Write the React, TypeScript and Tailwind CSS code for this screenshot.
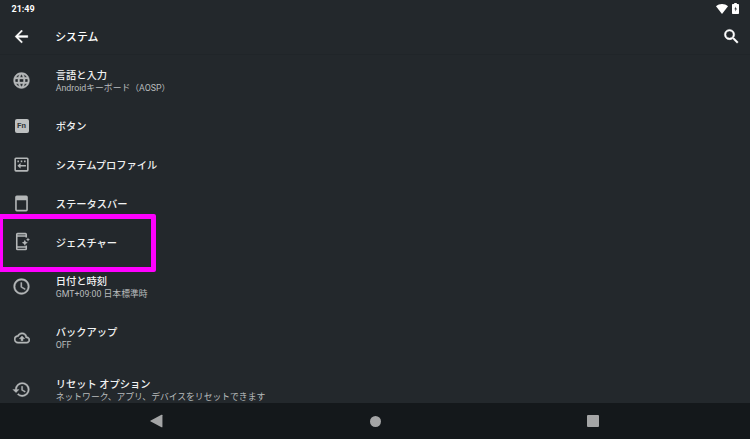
import type { ReactNode } from "react";

const LATIN_JP = "font-['Roboto','Noto_Sans_CJK_JP',sans-serif]";

function Glyph({ children, className = "size-[19px]" }: { children: ReactNode; className?: string }) {
  return (
    <svg viewBox="0 0 24 24" fill="currentColor" className={`block shrink-0 ${className}`}>
      {children}
    </svg>
  );
}

const globe = (
  <path stroke="currentColor" strokeWidth=".5" d="M11.99 2C6.47 2 2 6.48 2 12s4.47 10 9.99 10C17.52 22 22 17.52 22 12S17.52 2 11.99 2zm6.93 6h-2.95a15.65 15.65 0 0 0-1.38-3.56A8.03 8.03 0 0 1 18.92 8zM12 4.04c.83 1.2 1.48 2.53 1.91 3.96h-3.82c.43-1.43 1.08-2.76 1.91-3.96zM4.26 14C4.1 13.36 4 12.69 4 12s.1-1.36.26-2h3.38c-.08.66-.14 1.32-.14 2s.06 1.34.14 2H4.26zm.82 2h2.95c.32 1.25.78 2.45 1.38 3.56A7.987 7.987 0 0 1 5.08 16zm2.95-8H5.08a7.987 7.987 0 0 1 4.33-3.56A15.65 15.65 0 0 0 8.03 8zM12 19.96c-.83-1.2-1.48-2.53-1.91-3.96h3.82c-.43 1.43-1.08 2.76-1.91 3.96zM14.34 14H9.66c-.09-.66-.16-1.32-.16-2s.07-1.35.16-2h4.68c.09.65.16 1.32.16 2s-.07 1.34-.16 2zm.25 5.56c.6-1.11 1.06-2.31 1.38-3.56h2.95a8.03 8.03 0 0 1-4.33 3.56zM16.36 14c.08-.66.14-1.32.14-2s-.06-1.34-.14-2h3.38c.16.64.26 1.31.26 2s-.1 1.36-.26 2h-3.38z" />
);
const profile = (
  <>
    <path fillRule="evenodd" d="M5 3h14a2 2 0 0 1 2 2v14a2 2 0 0 1-2 2H5a2 2 0 0 1-2-2V5a2 2 0 0 1 2-2zm0 2v14h14V5z" />
    <path d="M6.8 7h2v2h-2zM11 7h2v2h-2zM15.2 7h2v2h-2zM17.6 12.6v2h-6.8v2.6l-4-3.6 4-3.6v2.6z" />
  </>
);
const statusBar = (
  <path fillRule="evenodd" d="M6 2h12a2 2 0 0 1 2 2v16a2 2 0 0 1-2 2H6a2 2 0 0 1-2-2V4a2 2 0 0 1 2-2zM6 7.9V20h12V7.9z" />
);
const gesture = (
  <>
    <path d="M7 1h10a2 2 0 0 1 2 2v4h-2V6H7v12h10v-1h2v4a2 2 0 0 1-2 2H7a2 2 0 0 1-2-2V3a2 2 0 0 1 2-2zm0 2v1h10V3zm0 17v1h10v-1z" fillRule="evenodd" />
    <path d="m16.2 9.7 1.2 2.6 2.6 1.2-2.6 1.2-1.2 2.6-1.2-2.6-2.6-1.2 2.6-1.2zM20.2 7l.8 1.7 1.7.8-1.7.8-.8 1.7-.8-1.7-1.7-.8 1.7-.8z" />
  </>
);
const clock = (
  <path stroke="currentColor" strokeWidth=".4" d="M11.99 2C6.47 2 2 6.48 2 12s4.47 10 9.99 10C17.52 22 22 17.52 22 12S17.52 2 11.99 2zM12 20a8 8 0 1 1 0-16 8 8 0 0 1 0 16zm.5-13H11v6l5.25 3.15.75-1.23-4.5-2.67z" />
);
const backup = (
  <path stroke="currentColor" strokeWidth=".7" d="M19.35 10.04A7.49 7.49 0 0 0 12 4C9.11 4 6.6 5.64 5.35 8.04A5.994 5.994 0 0 0 0 14c0 3.31 2.69 6 6 6h13c2.76 0 5-2.24 5-5 0-2.64-2.05-4.78-4.65-4.96zM19 18H6c-2.21 0-4-1.79-4-4 0-2.05 1.53-3.76 3.56-3.97l1.07-.11.5-.95A5.469 5.469 0 0 1 12 6c2.62 0 4.88 1.86 5.39 4.43l.3 1.5 1.53.11A2.98 2.98 0 0 1 22 15c0 1.65-1.35 3-3 3zM8 13h2.55v3h2.9v-3H16l-4-4z" />
);
const history = (
  <path stroke="currentColor" strokeWidth=".4" d="M13 3a9 9 0 0 0-9 9H1l3.89 3.89.07.14L9 12H6c0-3.87 3.13-7 7-7s7 3.13 7 7-3.13 7-7 7c-1.93 0-3.68-.79-4.94-2.06l-1.42 1.42A8.954 8.954 0 0 0 13 21a9 9 0 0 0 0-18zm-1 5v5l4.28 2.54.72-1.21-3.5-2.08V8z" />
);

type Entry = { title: string; detail?: string; icon: ReactNode };

const entries: Entry[] = [
  { title: "言語と入力", detail: "Androidキーボード（AOSP）", icon: <Glyph>{globe}</Glyph> },
  {
    title: "ボタン",
    icon: (
      <span className="mt-px flex size-[14px] items-center justify-center rounded-[2px] bg-[#bdc0c1] text-[8px] leading-none font-bold text-[#33383b]">
        Fn
      </span>
    ),
  },
  { title: "システムプロファイル", icon: <Glyph>{profile}</Glyph> },
  { title: "ステータスバー", icon: <Glyph>{statusBar}</Glyph> },
  { title: "ジェスチャー", icon: <Glyph>{gesture}</Glyph> },
  { title: "日付と時刻", detail: "GMT+09:00 日本標準時", icon: <Glyph>{clock}</Glyph> },
  { title: "バックアップ", detail: "OFF", icon: <Glyph className="size-[16px]">{backup}</Glyph> },
  { title: "リセット オプション", detail: "ネットワーク、アプリ、デバイスをリセットできます", icon: <Glyph>{history}</Glyph> },
];

function Row({ title, detail, icon }: Entry) {
  return (
    <li className={`flex shrink-0 items-center ${detail ? "h-[51.2px]" : "h-[38.8px]"}`}>
      <div className="flex w-[55.7px] shrink-0 pl-3 text-[#b4b7b8]">
        <div className="flex w-[19px] justify-center">{icon}</div>
      </div>
      <div className={`whitespace-nowrap ${detail ? "pt-[1.6px]" : "pt-[2.6px]"}`}>
        <div className="text-[10.25px] leading-[13px] font-medium text-[#f1f2f2]">{title}</div>
        {detail && <div className="text-[8.8px] leading-[12px] text-[#b9bcbd]">{detail}</div>}
      </div>
    </li>
  );
}

export default function App() {
  return (
    <div className={`relative flex h-[439px] w-[750px] flex-col overflow-hidden bg-[#23282c] text-white ${LATIN_JP}`}>
      <div className="flex h-[18px] shrink-0 items-center justify-between pr-[11px] pl-[11.5px]">
        <span className="pt-px text-[9px] leading-none font-bold">21:49</span>
        <div className="flex items-center gap-1 pb-[1px]">
          <svg viewBox="0 0 12 10" className="h-[10px] w-3" fill="currentColor">
            <path d="M0 2.2C1.7.7 3.8 0 6 0s4.3.7 6 2.2L6 10z" />
          </svg>
          <svg viewBox="0 0 7 11" className="h-[11px] w-[7px]" fill="currentColor">
            <path fillRule="evenodd" d="M2.2 0h2.6v1H6.2q.8 0 .8.8v8.4q0 .8-.8.8H.8q-.8 0-.8-.8V1.8Q0 1 .8 1h1.4zM3.8 3.4 2.4 6.2h1v2.4l1.5-3H3.8z" />
          </svg>
        </div>
      </div>
      <header className="flex h-[37px] shrink-0 items-center border-b border-[#202529] pr-[9.5px] pl-3">
        <Glyph>
          <path stroke="currentColor" strokeWidth=".4" d="M20 10.8H7.8l5.6-5.6L12 3.8 3.8 12l8.2 8.2 1.4-1.4-5.6-5.6H20z" />
        </Glyph>
        <h1 className="ml-[24.2px] pt-[4px] text-[10.9px] leading-none font-medium">システム</h1>
        <Glyph className="ml-auto size-[19px]">
          <path stroke="currentColor" strokeWidth=".6" d="M15.5 14h-.79l-.28-.27A6.471 6.471 0 0 0 16 9.5 6.5 6.5 0 1 0 9.5 16c1.61 0 3.09-.59 4.23-1.57l.27.28v.79l5 4.99L20.49 19zm-6 0a4.5 4.5 0 1 1 0-9 4.5 4.5 0 0 1 0 9z" />
        </Glyph>
      </header>
      <ul className="flex h-[348px] shrink-0 flex-col overflow-hidden">
        {entries.map((entry) => (
          <Row key={entry.title} {...entry} />
        ))}
      </ul>
      <nav className="flex h-9 shrink-0 items-center bg-[#14181b] text-[#a4a5a6]">
        <svg viewBox="0 0 12 14" className="ml-[150px] h-[14px] w-[13px]" preserveAspectRatio="none" fill="currentColor">
          <path d="M10.6.8Q11.5.3 11.5 1.3v11.4q0 1-.9.5L.7 7.6q-1-.6 0-1.2z" />
        </svg>
        <span className="ml-[207px] size-[11px] rounded-full bg-current" />
        <span className="ml-[206px] size-3 rounded-[1px] bg-current" />
      </nav>
      <div className="pointer-events-none absolute top-[214px] -left-[2px] h-[58px] w-[158px] rounded-[2px] border-[5px] border-[#ff00ff]" />
    </div>
  );
}
